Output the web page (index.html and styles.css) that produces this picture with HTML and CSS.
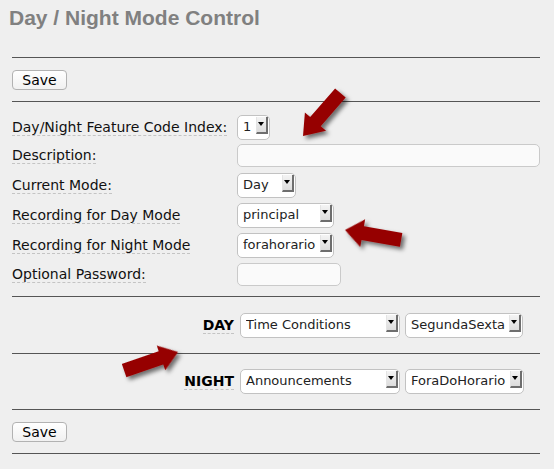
FILE: index.html
```html
<!DOCTYPE html>
<html>
<head>
<meta charset="utf-8">
<link rel="stylesheet" href="styles.css">
</head>
<body>
<div class="page">
  <h1 class="title">Day / Night Mode Control</h1>
  <div class="sec sec-save-top">
    <button class="btn">Save</button>
  </div>
  <div class="sec sec-form">
    <div class="grid">
      <div class="lbl"><span>Day/Night Feature Code Index:</span></div>
      <div class="ctl"><div class="sel w33"><select><option>1</option></select><span class="arr"></span></div></div>
      <div class="lbl"><span>Description:</span></div>
      <div class="ctl"><input class="txt w303" type="text"></div>
      <div class="lbl"><span>Current Mode:</span></div>
      <div class="ctl"><div class="sel w59"><select><option>Day</option></select><span class="arr"></span></div></div>
      <div class="lbl"><span>Recording for Day Mode</span></div>
      <div class="ctl"><div class="sel w97"><select><option>principal</option></select><span class="arr"></span></div></div>
      <div class="lbl"><span>Recording for Night Mode</span></div>
      <div class="ctl"><div class="sel w97"><select><option>forahorario</option></select><span class="arr"></span></div></div>
      <div class="lbl"><span>Optional Password:</span></div>
      <div class="ctl"><input class="txt w104" type="password"></div>
    </div>
  </div>
  <div class="sec sec-dest">
    <div class="dest-row">
      <div class="dlbl"><span>DAY</span></div>
      <div class="sel w160"><select><option>Time Conditions</option></select><span class="arr"></span></div>
      <div class="sel w118"><select><option>SegundaSexta</option></select><span class="arr"></span></div>
    </div>
  </div>
  <div class="sec sec-dest">
    <div class="dest-row">
      <div class="dlbl"><span>NIGHT</span></div>
      <div class="sel w160"><select><option>Announcements</option></select><span class="arr"></span></div>
      <div class="sel w119"><select><option>ForaDoHorario</option></select><span class="arr"></span></div>
    </div>
  </div>
  <div class="sec sec-save-bottom">
    <button class="btn">Save</button>
  </div>
  <div class="sec sec-end"></div>

  <svg class="arrows" width="554" height="469" viewBox="0 0 554 469">
    <defs>
      <filter id="sh" x="-30%" y="-30%" width="160%" height="160%">
        <feDropShadow dx="3" dy="3" stdDeviation="2" flood-color="#000" flood-opacity="0.55"/>
      </filter>
    </defs>
    <g fill="#960000" filter="url(#sh)">
      <polygon transform="translate(303,136) rotate(131)" points="0,0 -19,-14 -19,-7 -57,-7 -57,7 -19,7 -19,14"/>
      <polygon transform="translate(345,230) rotate(190)" points="0,0 -18,-14 -18,-7 -57,-7 -57,7 -18,7 -18,14"/>
      <polygon transform="translate(178,352) rotate(-19)" points="0,0 -18,-13 -18,-7 -57,-7 -57,7 -18,7 -18,13"/>
    </g>
  </svg>
</div>
</body>
</html>
```
FILE: styles.css
```css
html, body {
  margin: 0;
  padding: 0;
  background: #efefef;
}
.page {
  position: relative;
  width: 554px;
  height: 469px;
  font-family: "DejaVu Sans", Verdana, sans-serif;
  color: #111;
}
.title {
  margin: 0;
  padding: 6px 0 0 9px;
  height: 57px;
  box-sizing: border-box;
  font-family: "Liberation Sans", Arial, sans-serif;
  font-size: 21px;
  line-height: 24px;
  font-weight: bold;
  color: #808080;
}
.sec {
  margin-left: 12px;
  width: 528px;
  border-top: 1px solid #555;
}
.sec-save-top {
  padding: 12px 0 11px;
}
.sec-save-bottom {
  padding: 12px 0 11px;
}
.btn {
  display: block;
  margin: 0;
  height: 20px;
  width: 55px;
  padding: 0;
  border: 1px solid #b2b2b2;
  border-radius: 4px;
  background: linear-gradient(#ffffff, #f1f1f1);
  font-family: "DejaVu Sans", sans-serif;
  font-size: 14px;
  line-height: 18px;
  color: #000;
}
.sec-form {
  padding: 11px 0 7px;
}
.grid {
  display: grid;
  grid-template-columns: 225px 1fr;
  grid-template-rows: 28px 29px 30px 30px 30px 29px;
  align-items: center;
}
.lbl {
  font-size: 14px;
  line-height: 17px;
}
.lbl span, .dlbl span {
  border-bottom: 1px dashed #c4c4c4;
}
.ctl {
  display: flex;
  align-items: center;
}
.sel {
  position: relative;
  display: inline-block;
  height: 25px;
}
.sel select {
  -webkit-appearance: none;
  appearance: none;
  box-sizing: border-box;
  width: 100%;
  height: 25px;
  margin: 0;
  padding: 0 0 2px 5px;
  border: 1px solid #c2c2c2;
  border-radius: 5px;
  background: #fff;
  font-family: "DejaVu Sans", sans-serif;
  font-size: 13px;
  color: #222;
  outline: none;
}
.arr {
  position: absolute;
  right: 2px;
  top: 2px;
  width: 9px;
  height: 15px;
  background: linear-gradient(#f4f4f4, #dcdcdc);
  border-left: 1px solid #e4e4e4;
  border-right: 2px solid #6e6e6e;
  border-bottom: 2px solid #6e6e6e;
}
.arr::after {
  content: "";
  position: absolute;
  left: 1px;
  top: 5px;
  border-left: 3.5px solid transparent;
  border-right: 3.5px solid transparent;
  border-top: 4px solid #000;
}
.w33 { width: 33px; }
.w59 { width: 59px; }
.w97 { width: 97px; }
.w160 { width: 160px; }
.w118 { width: 118px; }
.w119 { width: 119px; }
.txt {
  box-sizing: border-box;
  height: 23px;
  margin: 0;
  border: 1px solid #cacaca;
  border-radius: 5px;
  background: #fafafa;
  padding: 0 4px;
  font-family: "DejaVu Sans", sans-serif;
  font-size: 13px;
}
.w303 { width: 303px; }
.w104 { width: 104px; }
.sec-dest {
  padding: 16px 0 15px;
}
.sec-dest + .sec-dest {
  padding-top: 15px;
}
.dest-row {
  display: flex;
  align-items: center;
  gap: 5px;
  height: 25px;
}
.dlbl {
  width: 222px;
  margin-right: 1px;
  text-align: right;
  font-weight: bold;
  font-size: 14px;
  line-height: 17px;
  color: #000;
}
.sec-end {
  height: 10px;
}
.arrows {
  position: absolute;
  left: 0;
  top: 0;
  pointer-events: none;
}
```
